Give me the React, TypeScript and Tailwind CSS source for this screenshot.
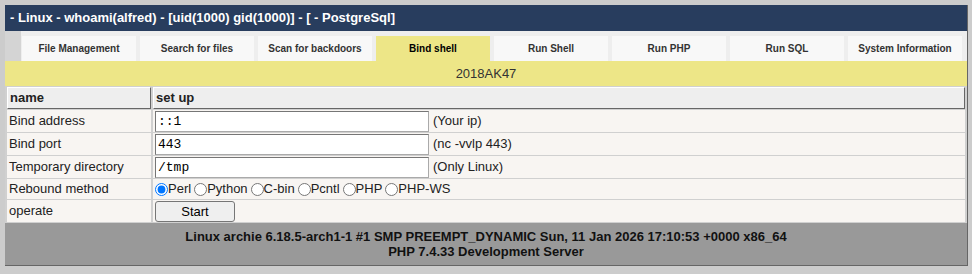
import { useState } from "react";

const tabs = [
    "File Management",
    "Search for files",
    "Scan for backdoors",
    "Bind shell",
    "Run Shell",
    "Run PHP",
    "Run SQL",
    "System Information",
];

const methods = ["Perl", "Python", "C-bin", "Pcntl", "PHP", "PHP-WS"];

export default function App() {
    const [method, setMethod] = useState("Perl");
    const [addr, setAddr] = useState("::1");
    const [port, setPort] = useState("443");
    const [dir, setDir] = useState("/tmp");

    const cell = "bg-[#f8f5f2] px-[2px] h-[22px] align-middle";
    const input =
        "w-[274px] h-[21px] px-[2px] bg-white border border-t-[#767676] border-l-[#767676] border-b-[#aaa] border-r-[#aaa] font-['Liberation_Mono',monospace] text-[13px] text-black outline-none";

    return (
        <div className="min-h-[274px] bg-[#cccccc] pt-[5px] pl-[5px] font-['Liberation_Sans',Arial,sans-serif] text-[#222]">
            <div className="w-[963px] bg-[#eeeeee] border-r border-b border-[#666]">
                {/* title */}
                <div className="h-[26px] bg-[#283d5e] pl-[5px] flex items-center text-white font-bold text-[13px]">
                    - Linux - whoami(alfred) - [uid(1000) gid(1000)] - [ - PostgreSql]
                </div>

                {/* tabs */}
                <div className="flex h-[30px]">
                    <div className="w-[16px] bg-[#d4d4d4]" />
                    <div className="flex gap-[4px] pt-[5px] pl-[1px]">
                        {tabs.map((t) => (
                            <div
                                key={t}
                                className={`w-[114px] h-[25px] flex items-center justify-center text-[10px] font-bold ${t === "Bind shell" ? "bg-[#ede687] text-black" : "bg-[#f8f8f8] text-[#333]"
                                    }`}
                            >
                                {t}
                            </div>
                        ))}
                    </div>
                </div>

                {/* sub title */}
                <div className="h-[25px] bg-[#ede687] flex items-center justify-center text-[13px] text-[#333]">
                    2018AK47
                </div>

                {/* form */}
                <table className="w-full bg-[#d0d0d0] border-separate border-spacing-x-[2px] border-spacing-y-[1px] text-[13px] text-[#222]">
                    <tbody>
                        <tr>
                            <td className="w-[144px] h-[22px] px-[2px] bg-[#eeeeee] font-bold border border-t-white border-l-white border-b-[#666] border-r-[#666]">
                                name
                            </td>
                            <td className="h-[22px] px-[2px] bg-[#eeeeee] font-bold border border-t-white border-l-white border-b-[#666] border-r-[#666]">
                                set up
                            </td>
                        </tr>
                        <tr>
                            <td className={cell}>Bind address</td>
                            <td className={cell}>
                                <div className="flex items-center gap-[4px]">
                                    <input className={input} value={addr} onChange={(e) => setAddr(e.target.value)} />
                                    <span>(Your ip)</span>
                                </div>
                            </td>
                        </tr>
                        <tr>
                            <td className={cell}>Bind port</td>
                            <td className={cell}>
                                <div className="flex items-center gap-[4px]">
                                    <input className={input} value={port} onChange={(e) => setPort(e.target.value)} />
                                    <span>(nc -vvlp 443)</span>
                                </div>
                            </td>
                        </tr>
                        <tr>
                            <td className={cell}>Temporary directory</td>
                            <td className={cell}>
                                <div className="flex items-center gap-[4px]">
                                    <input className={input} value={dir} onChange={(e) => setDir(e.target.value)} />
                                    <span>(Only Linux)</span>
                                </div>
                            </td>
                        </tr>
                        <tr>
                            <td className="bg-[#f8f5f2] px-[2px] h-[20px]">Rebound method</td>
                            <td className="bg-[#f8f5f2] px-[2px] h-[20px]">
                                <div className="flex items-center">
                                    {methods.map((m) => (
                                        <label key={m} className="flex items-center mr-[3px]">
                                            <input
                                                type="radio"
                                                name="method"
                                                checked={method === m}
                                                onChange={() => setMethod(m)}
                                                className="w-[13px] h-[13px] m-0"
                                            />
                                            {m}
                                        </label>
                                    ))}
                                </div>
                            </td>
                        </tr>
                        <tr>
                            <td className={cell}>operate</td>
                            <td className={cell}>
                                <button className="w-[80px] h-[21px] bg-[#efefef] border border-[#767676] rounded-[3px] text-[13px] text-black">
                                    Start
                                </button>
                            </td>
                        </tr>
                    </tbody>
                </table>

                {/* footer */}
                <div className="h-[42px] bg-[#999999] flex flex-col items-center justify-center text-[13px] font-bold text-[#111] leading-[15px]">
                    <div>Linux archie 6.18.5-arch1-1 #1 SMP PREEMPT_DYNAMIC Sun, 11 Jan 2026 17:10:53 +0000 x86_64</div>
                    <div>PHP 7.4.33 Development Server</div>
                </div>
            </div>
        </div>
    );
}
